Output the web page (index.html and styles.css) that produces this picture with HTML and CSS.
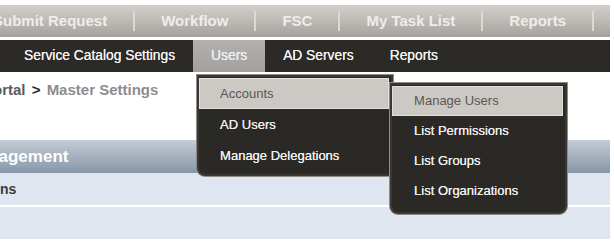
FILE: index.html
```html
<!DOCTYPE html>
<html>
<head>
    <meta charset="UTF-8">
    <title>Master Settings - Users</title>
    <link rel="stylesheet" href="styles.css">
</head>
<body>

    <div class="page">
        <div class="topbar">
            <ul class="topnav">
                <li>Submit Request</li>
                <li>Workflow</li>
                <li>FSC</li>
                <li>My Task List</li>
                <li>Reports</li>
            </ul>
        </div>

        <div class="subbar">
            <ul class="subnav">
                <li>Service Catalog Settings</li>
                <li class="active">Users
                    <div class="menu menu-main">
                        <div class="menu-item selected">Accounts
                            <div class="menu menu-sub">
                                <div class="menu-item selected">Manage Users</div>
                                <div class="menu-item">List Permissions</div>
                                <div class="menu-item">List Groups</div>
                                <div class="menu-item">List Organizations</div>
                            </div>
                        </div>
                        <div class="menu-item">AD Users</div>
                        <div class="menu-item">Manage Delegations</div>
                    </div>
                </li>
                <li>AD Servers</li>
                <li>Reports</li>
            </ul>
        </div>

        <div class="breadcrumb">
            <span class="crumb">Portal</span>
            <span class="sep">&gt;</span>
            <span class="current">Master Settings</span>
        </div>

        <div class="panel">
            <div class="panel-head"><span>User Management</span></div>
            <div class="panel-row"><span class="row-label">Permissions</span></div>
            <div class="panel-row"></div>
        </div>
    </div>

</body>
</html>
```

FILE: styles.css
```css
body {
    margin: 0;
    padding: 0;
    background: #fff;
    font-family: 'Liberation Sans', Arial, sans-serif;
    overflow: hidden;
}

.page {
    width: 610px;
    padding-top: 5px;
}

/* top gray bar */
.topbar {
    height: 32px;
    background: linear-gradient(#d2cfcc, #bdb9b5 50%, #a5a19d);
    display: flex;
    align-items: center;
}

.topnav {
    list-style: none;
    margin: 0 0 0 -33px;
    padding: 0;
    display: flex;
    align-items: center;
}

.topnav li {
    padding: 0 26px;
    height: 20px;
    line-height: 20px;
    font-size: 15px;
    font-weight: bold;
    color: #efedeb;
    white-space: nowrap;
}

.topnav li + li {
    border-left: 2px solid #dcd9d6;
}

.topnav li:last-child {
    border-right: 2px solid #dcd9d6;
}

/* dark bar */
.subbar {
    margin-top: 3px;
    height: 32px;
    background: #2c2a27;
}

.subnav {
    list-style: none;
    margin: 0 0 0 6px;
    padding: 0;
    display: flex;
    height: 32px;
}

.subnav li {
    position: relative;
    padding: 0 18px;
    line-height: 32px;
    font-size: 13.8px;
    color: #f3f2f0;
    text-shadow: 0 0 0.6px #fff;
    white-space: nowrap;
}

.subnav li.active {
    background: linear-gradient(#b3b1af, #a3a19f);
    color: #eeeeee;
}

/* dropdown menus */
.menu {
    position: absolute;
    background: #2b2926;
    border: 2px solid #3a3835;
    box-shadow: 0 0 0 1px #8e8b88;
    border-radius: 0 0 0 8px;
    padding: 1px 0 6px;
    text-align: left;
}

.menu-main {
    top: 35px;
    left: 4px;
    width: 192px;
    padding-bottom: 3px;
    z-index: 5;
}

.menu-main > .menu-item {
    height: 31px;
    line-height: 31px;
}

.menu-sub {
    top: 5px;
    left: 191px;
    width: 173px;
    border-radius: 0 0 8px 8px;
    z-index: 6;
}

.menu-item {
    position: relative;
    height: 30px;
    line-height: 30px;
    padding-left: 21px;
    font-size: 13px;
    color: #efede9;
    text-shadow: 0 0 0.6px #fff;
}

.menu-sub .menu-item {
    padding-left: 22px;
}

.menu-item.selected {
    background: #ccc9c5;
    color: #5a5754;
    text-shadow: none;
    margin-right: 2px;
    box-shadow: inset 0 0 0 1px #e2dfdc;
}

/* breadcrumb */
.breadcrumb {
    height: 59px;
    padding-top: 9px;
    line-height: 18px;
    font-size: 15px;
    font-weight: bold;
    white-space: nowrap;
}

.crumb {
    margin-left: -17px;
    color: #5b5b5b;
}

.sep {
    margin: 0 2px;
    color: #1c2b44;
}

.current {
    color: #8d8d8d;
}

/* panel */
.panel-head {
    height: 33px;
    line-height: 33px;
    background: linear-gradient(#c3ccd6, #a5b1be 50%, #8797a8);
    color: #fff;
    font-size: 17px;
    font-weight: bold;
    white-space: nowrap;
}

.panel-head span {
    margin-left: -78px;
}

.panel-row {
    height: 32px;
    line-height: 32px;
    background: #dfe6ef;
    border-bottom: 2px solid #fff;
    font-size: 14px;
    font-weight: bold;
    color: #3b3b3b;
    white-space: nowrap;
}

.row-label {
    margin-left: -67px;
}
```
